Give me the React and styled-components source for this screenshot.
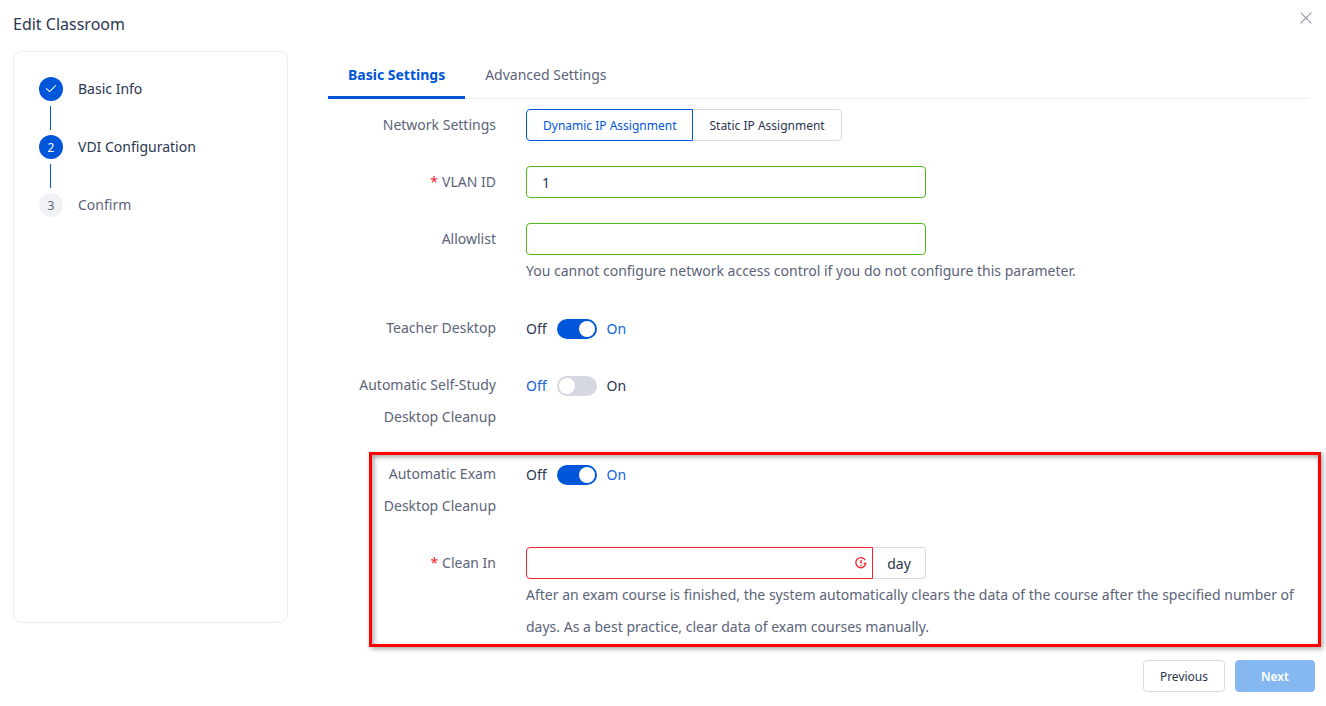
import React, { useState } from "react";
import styled, { createGlobalStyle, css } from "styled-components";

const STEPS = [
  { label: "Basic Info", status: "done" },
  { label: "VDI Configuration", status: "current" },
  { label: "Confirm", status: "waiting" },
];

const CheckIcon = () => (
  <svg width="12" height="12" viewBox="0 0 12 12" fill="none" aria-hidden="true">
    <path d="M1.2 5.4 4.6 8.6 10.8 2.4" stroke="#fff" strokeWidth="1.1" />
  </svg>
);

const CloseIcon = () => (
  <svg width="12" height="12" viewBox="0 0 12 12" fill="none" aria-hidden="true">
    <path d="M.6.6 11.4 11.4M11.4.6.6 11.4" stroke="#9299a7" strokeWidth="1.2" />
  </svg>
);

const WarningIcon = () => (
  <svg width="12" height="12" viewBox="0 0 12 12" fill="none" aria-hidden="true">
    <path
      d="M10.2 3.2A5 5 0 1 0 10.8 6.5H8.6"
      stroke="#f5222d"
      strokeWidth="1.3"
    />
    <path d="M6 3V6.6M6 7.7V9" stroke="#f5222d" strokeWidth="1.4" />
  </svg>
);

const SwitchField = ({ id, checked, onChange }) => (
  <SwitchRow>
    <SwitchText $active={!checked}>Off</SwitchText>
    <Switch
      id={id}
      type="checkbox"
      role="switch"
      checked={checked}
      onChange={(e) => onChange(e.target.checked)}
    />
    <SwitchText $active={checked}>On</SwitchText>
  </SwitchRow>
);

const App = () => {
  const [tab, setTab] = useState("basic");
  const [assignment, setAssignment] = useState("dynamic");
  const [vlanId, setVlanId] = useState("1");
  const [allowlist, setAllowlist] = useState("");
  const [teacher, setTeacher] = useState(true);
  const [selfStudy, setSelfStudy] = useState(false);
  const [exam, setExam] = useState(true);
  const [days, setDays] = useState("");

  return (
    <>
      <GlobalStyle />
      <Dialog>
        <Header>
          <Title>Edit Classroom</Title>
          <CloseButton type="button" aria-label="Close">
            <CloseIcon />
          </CloseButton>
        </Header>

        <Body>
          <Sidebar>
            {STEPS.map((step, index) => (
              <Step key={step.label}>
                <StepBadge $status={step.status}>
                  {step.status === "done" ? <CheckIcon /> : index + 1}
                </StepBadge>
                <StepLabel $status={step.status}>{step.label}</StepLabel>
              </Step>
            ))}
          </Sidebar>

          <Main>
            <Tabs role="tablist">
              <Tab
                type="button"
                role="tab"
                aria-selected={tab === "basic"}
                $active={tab === "basic"}
                onClick={() => setTab("basic")}
              >
                Basic Settings
              </Tab>
              <Tab
                type="button"
                role="tab"
                aria-selected={tab === "advanced"}
                $active={tab === "advanced"}
                onClick={() => setTab("advanced")}
              >
                Advanced Settings
              </Tab>
            </Tabs>

            <Form id="classroom" onSubmit={(e) => e.preventDefault()}>
              <Row>
                <Label as="span" id="network">
                  Network Settings
                </Label>
                <Segments role="radiogroup" aria-labelledby="network">
                  <Segment>
                    <input
                      type="radio"
                      name="assignment"
                      checked={assignment === "dynamic"}
                      onChange={() => setAssignment("dynamic")}
                    />
                    Dynamic IP Assignment
                  </Segment>
                  <Segment>
                    <input
                      type="radio"
                      name="assignment"
                      checked={assignment === "static"}
                      onChange={() => setAssignment("static")}
                    />
                    Static IP Assignment
                  </Segment>
                </Segments>
              </Row>

              <Row>
                <Label htmlFor="vlan" $required>
                  VLAN ID
                </Label>
                <InputGroup>
                  <Input
                    id="vlan"
                    type="text"
                    value={vlanId}
                    onChange={(e) => setVlanId(e.target.value)}
                  />
                </InputGroup>
              </Row>

              <Row>
                <Label htmlFor="allowlist">Allowlist</Label>
                <div>
                  <InputGroup>
                    <Input
                      id="allowlist"
                      type="text"
                      value={allowlist}
                      onChange={(e) => setAllowlist(e.target.value)}
                    />
                  </InputGroup>
                  <Hint>
                    You cannot configure network access control if you do not
                    configure this parameter.
                  </Hint>
                </div>
              </Row>

              <Row>
                <Label htmlFor="teacher">Teacher Desktop</Label>
                <SwitchField id="teacher" checked={teacher} onChange={setTeacher} />
              </Row>

              <Row>
                <Label htmlFor="selfStudy">Automatic Self-Study Desktop Cleanup</Label>
                <SwitchField id="selfStudy" checked={selfStudy} onChange={setSelfStudy} />
              </Row>

              <Highlighted>
                <Row>
                  <Label htmlFor="exam">Automatic Exam Desktop Cleanup</Label>
                  <SwitchField id="exam" checked={exam} onChange={setExam} />
                </Row>

                <Row>
                  <Label htmlFor="days" $required>
                    Clean In
                  </Label>
                  <div>
                    <InputGroup>
                      <Input
                        id="days"
                        type="text"
                        $invalid
                        $addon
                        value={days}
                        onChange={(e) => setDays(e.target.value)}
                      />
                      <Addon>
                        <Feedback>
                          <WarningIcon />
                        </Feedback>
                        day
                      </Addon>
                    </InputGroup>
                    <Hint>
                      After an exam course is finished, the system automatically
                      clears the data of the course after the specified number of
                      days. As a best practice, clear data of exam courses manually.
                    </Hint>
                  </div>
                </Row>
              </Highlighted>
            </Form>
          </Main>
        </Body>

        <Footer>
          <Button type="button">Previous</Button>
          <Button type="submit" form="classroom" $primary>
            Next
          </Button>
        </Footer>
      </Dialog>
    </>
  );
};

const GlobalStyle = createGlobalStyle`
  * {
    box-sizing: border-box;
  }

  body {
    margin: 0;
    background: #fff;
    color: #2b3650;
    font-family: "Noto Sans", "Open Sans", sans-serif;
    font-size: 14px;
  }

  button,
  input {
    font: inherit;
    color: inherit;
  }
`;

const Dialog = styled.div`
  display: flex;
  flex-direction: column;
`;

const Header = styled.header`
  display: flex;
  align-items: flex-start;
  justify-content: space-between;
  height: 51px;
  padding: 12px 14px 0 13px;
`;

const Title = styled.h1`
  margin: 0;
  font-size: 16px;
  font-weight: 400;
  line-height: 24px;
`;

const CloseButton = styled.button`
  display: flex;
  padding: 0;
  border: none;
  background: transparent;
  cursor: pointer;
`;

const Body = styled.div`
  display: flex;
  gap: 40px;
  padding: 0 17px 0 13px;
`;

const Sidebar = styled.ol`
  flex: 0 0 275px;
  margin: 0 0 20px;
  padding: 25px;
  border: 1px solid #ebedf5;
  border-radius: 8px;
  list-style: none;
`;

const Step = styled.li`
  display: grid;
  grid-template-columns: 24px 1fr;
  column-gap: 15px;
  align-items: center;

  &:not(:last-child)::after {
    content: "";
    width: 1px;
    height: 24px;
    margin: 5px 11px;
    background: #0056d9;
  }
`;

const StepBadge = styled.span`
  display: flex;
  align-items: center;
  justify-content: center;
  height: 24px;
  border-radius: 50%;
  background: ${(props) => (props.$status === "waiting" ? "#f1f2f5" : "#0056d9")};
  color: ${(props) => (props.$status === "waiting" ? "#5b6478" : "#fff")};
  font-size: 12px;
`;

const StepLabel = styled.span`
  color: ${(props) => (props.$status === "waiting" ? "#5b6478" : "#2b3650")};
  line-height: 24px;
`;

const Main = styled.main`
  flex: 1;
  min-width: 0;
`;

const Tabs = styled.div`
  display: flex;
  height: 48px;
  border-bottom: 1px solid #ebedf8;
`;

const Tab = styled.button`
  height: 48px;
  padding: 2px 20px 0;
  border: none;
  border-bottom: 3px solid transparent;
  background: transparent;
  color: #5b6478;
  line-height: 20px;
  cursor: pointer;

  ${(props) =>
    props.$active &&
    css`
      border-color: #0056d9;
      color: #0056d9;
      font-weight: 700;
    `}
`;

const Form = styled.form`
  display: flex;
  flex-direction: column;
  gap: 25px;
  padding-top: 10px;
`;

const Row = styled.div`
  display: grid;
  grid-template-columns: 168px 1fr;
  column-gap: 30px;
  align-items: start;
`;

const Label = styled.label`
  padding-left: 20px;
  color: #5b6478;
  line-height: 32px;
  text-align: right;

  ${(props) =>
    props.$required &&
    css`
      &::before {
        content: "*";
        margin-right: 4px;
        color: #f5222d;
      }
    `}
`;

const Segments = styled.div`
  display: flex;
`;

const Segment = styled.label`
  display: flex;
  align-items: center;
  height: 32px;
  padding: 0 16px;
  border: 1px solid #d7dae2;
  font-size: 12px;
  cursor: pointer;

  &:first-child {
    border-radius: 4px 0 0 4px;
  }

  &:last-child {
    margin-left: -1px;
    border-radius: 0 4px 4px 0;
  }

  &:has(input:checked) {
    z-index: 1;
    border-color: #0056d9;
    color: #0056d9;
  }

  input {
    appearance: none;
    width: 0;
    height: 0;
    margin: 0;
  }
`;

const InputGroup = styled.div`
  display: flex;
  max-width: 400px;
`;

const Input = styled.input`
  flex: 1;
  min-width: 0;
  height: 32px;
  padding: 0 15px;
  border: 1px solid ${(props) => (props.$invalid ? "#f5222d" : "#52b81a")};
  border-radius: ${(props) => (props.$addon ? "4px 0 0 4px" : "4px")};
  outline: none;
`;

const Addon = styled.span`
  position: relative;
  display: flex;
  align-items: center;
  justify-content: center;
  width: 53px;
  border: 1px solid #d7dae2;
  border-left: none;
  border-radius: 0 4px 4px 0;
`;

const Feedback = styled.span`
  position: absolute;
  right: 100%;
  display: flex;
  margin-right: 6px;
`;

const Hint = styled.p`
  margin: 0;
  color: #5b6478;
  line-height: 32px;
`;

const SwitchRow = styled.div`
  display: flex;
  align-items: center;
  gap: 10px;
  height: 34px;
  margin-bottom: -2px;
`;

const SwitchText = styled.span`
  color: ${(props) => (props.$active ? "#0f62e0" : "#2b3650")};
  line-height: 20px;
`;

const Switch = styled.input`
  display: flex;
  align-items: center;
  appearance: none;
  width: 40px;
  height: 20px;
  margin: 0;
  padding: 0 2px;
  border-radius: 10px;
  background: #d5d8e0;
  cursor: pointer;

  &::before {
    content: "";
    width: 16px;
    height: 16px;
    border-radius: 50%;
    background: #fff;
  }

  &:checked {
    justify-content: flex-end;
    background: #0056d9;
  }
`;

const Highlighted = styled.section`
  position: relative;
  display: flex;
  flex-direction: column;
  gap: 25px;

  /* frame drawn over the group, wider than the form column */
  &::after {
    content: "";
    position: absolute;
    inset: -6px -12px -4px 41px;
    border: 3px solid #fe0000;
    box-shadow:
      2px 2px 5px rgba(0, 0, 0, 0.35),
      inset 2px 2px 5px rgba(0, 0, 0, 0.35);
    pointer-events: none;
  }
`;

const Footer = styled.footer`
  display: flex;
  justify-content: flex-end;
  gap: 10px;
  padding: 17px 11px 14px;
`;

const Button = styled.button`
  min-width: 80px;
  height: 32px;
  padding: 0 16px;
  border: 1px solid #d7dae2;
  border-radius: 4px;
  background: #fff;
  font-size: 12px;
  cursor: pointer;

  ${(props) =>
    props.$primary &&
    css`
      border-color: #85b8f0;
      background: #85b8f0;
      color: #fff;
      font-weight: 600;
    `}
`;

export default App;
